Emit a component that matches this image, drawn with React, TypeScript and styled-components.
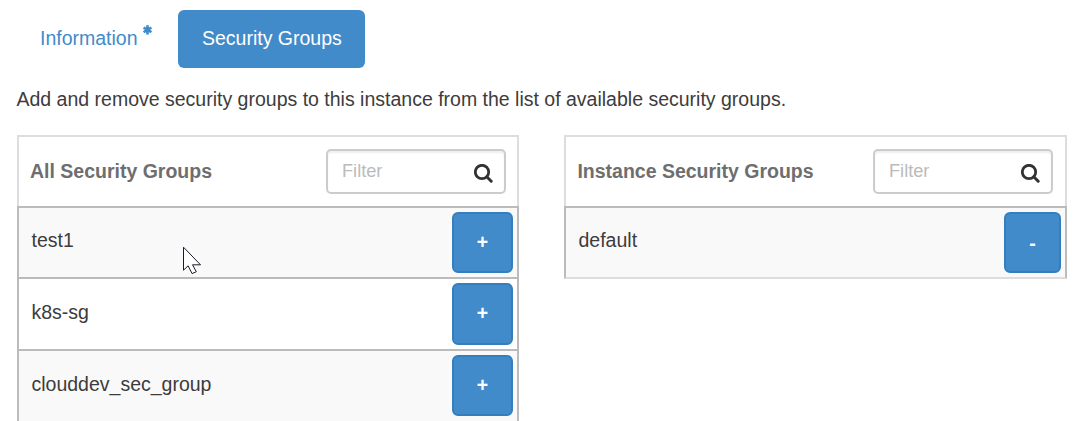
import React from "react";
import styled, { createGlobalStyle } from "styled-components";

const GlobalStyle = createGlobalStyle`
  *, *::before, *::after { box-sizing: border-box; }
  html, body { margin: 0; background: #fff; }
  body { overflow: hidden; }
`;

const Page = styled.main`
  position: relative;
  height: 421px;
  overflow: hidden;
  padding: 10px 16px 0 17px;
  font-family: "Liberation Sans", Arial, sans-serif;
  font-size: 19.5px;
  line-height: 28px;
  color: #3c3c3c;
`;

const Tabs = styled.nav`
  display: flex;
  height: 58px;
`;

const Tab = styled.button<{ $active?: boolean; $width: number }>`
  display: flex;
  width: ${(p) => p.$width}px;
  height: 58px;
  padding: 14px 0 0 ${(p) => (p.$active ? 24 : 23)}px;
  border: 0;
  border-radius: 6px;
  font: inherit;
  text-align: left;
  white-space: nowrap;
  color: ${(p) => (p.$active ? "#fff" : "#428bca")};
  background: ${(p) => (p.$active ? "#428bca" : "transparent")};
`;

const Required = styled.svg`
  width: 9px;
  height: 10px;
  margin: 1px 0 0 5px;
`;

const Intro = styled.p`
  margin: 17px 0 0 -0.5px;
  white-space: nowrap;
`;

const Tables = styled.div`
  display: grid;
  grid-template-columns: 502px 503px;
  column-gap: 45px;
  align-items: start;
  margin-top: 22px;
`;

const Panel = styled.section`
  min-width: 0;
`;

const PanelHeader = styled.header<{ $left: number; $right: number }>`
  display: flex;
  justify-content: space-between;
  height: 71px;
  padding: 12px ${(p) => p.$right}px 0 ${(p) => p.$left}px;
  border: 2px solid #ddd;
  border-bottom: 0;
`;

const Title = styled.h2`
  margin: 8px 0 0;
  font-size: 19.5px;
  line-height: 28px;
  font-weight: 700;
  color: #6e6e6e;
  white-space: nowrap;
`;

const Search = styled.label`
  display: flex;
  justify-content: space-between;
  width: 180px;
  height: 45px;
  padding: 0 11px 0 14px;
  border: 2px solid #ccc;
  border-radius: 5px;
  background: #fff;
  box-shadow: inset 0 2px 2px rgba(0, 0, 0, 0.07);
`;

const Input = styled.input`
  width: 110px;
  height: 40px;
  padding: 1px 0 0;
  border: 0;
  outline: 0;
  background: transparent;
  font: inherit;
  font-size: 18.2px;
  color: #3c3c3c;
  &::placeholder { color: #bbb; opacity: 1; }
`;

const SearchIcon = styled.svg`
  width: 19px;
  height: 19px;
  margin-top: 13px;
`;

const Row = styled.div<{ $height: number; $striped?: boolean; $last?: boolean }>`
  display: flex;
  justify-content: space-between;
  height: ${(p) => p.$height}px;
  padding: 4px 4px 0 12.5px;
  border: 2px solid #bbb;
  border-bottom: ${(p) => (p.$last ? "2px solid #ddd" : "0")};
  background: ${(p) => (p.$striped ? "#f9f9f9" : "#fff")};
`;

const Name = styled.span<{ $offset: number }>`
  margin-top: ${(p) => p.$offset}px;
`;

const Action = styled.button<{ $width: number; $height: number; $lift?: number }>`
  width: ${(p) => p.$width}px;
  height: ${(p) => p.$height}px;
  padding: 0 0 ${(p) => p.$lift ?? 2}px;
  border: 2px solid #357ebd;
  border-radius: 6px;
  background: #428bca;
  color: #fff;
  font: 700 19.5px/28px "Liberation Sans", Arial, sans-serif;
`;

const Cursor = styled.svg`
  position: absolute;
  left: 183px;
  top: 246px;
  width: 19px;
  height: 29px;
`;

function Filter() {
  return (
    <Search>
      <Input placeholder="Filter" />
      <SearchIcon viewBox="0 0 19 19" fill="none" stroke="#333">
        <circle cx="8" cy="8" r="6.7" strokeWidth="2.8" />
        <path d="M12.8 12.8 17.2 17.2" strokeWidth="3" strokeLinecap="round" />
      </SearchIcon>
    </Search>
  );
}

const available = [
  { name: "test1", height: 71, button: 61, offset: 14 },
  { name: "k8s-sg", height: 72, button: 62, offset: 15 },
  { name: "clouddev_sec_group", height: 72, button: 61, offset: 15 },
];

export default function App() {
  return (
    <Page>
      <GlobalStyle />
      <Tabs>
        <Tab $width={161}>
          Information
          <Required viewBox="0 0 9 10" stroke="#428bca" strokeWidth="2.7">
            <path d="M4.5.2v9.4M.6 2.6l7.8 4.6M8.4 2.6.6 7.2" />
          </Required>
        </Tab>
        <Tab $active $width={187}>Security Groups</Tab>
      </Tabs>
      <Intro>
        Add and remove security groups to this instance from the list of available security groups.
      </Intro>
      <Tables>
        <Panel>
          <PanelHeader $left={11} $right={11}>
            <Title>All Security Groups</Title>
            <Filter />
          </PanelHeader>
          {available.map((group, i) => (
            <Row key={group.name} $height={group.height} $striped={i % 2 === 0}>
              <Name $offset={group.offset}>{group.name}</Name>
              <Action $width={61} $height={group.button}>+</Action>
            </Row>
          ))}
        </Panel>
        <Panel>
          <PanelHeader $left={11.4} $right={12}>
            <Title>Instance Security Groups</Title>
            <Filter />
          </PanelHeader>
          <Row $height={73} $striped $last>
            <Name $offset={14}>default</Name>
            <Action $width={57} $height={61} $lift={0}>-</Action>
          </Row>
        </Panel>
      </Tables>
      <Cursor viewBox="0 0 19 29">
        <path
          d="M.5 1.2v23l4.6-4.4 4 7.8 4.2-1.9-3.8-6.9h8z"
          fill="#fff"
          stroke="#1a1a2a"
          strokeWidth="1"
        />
      </Cursor>
    </Page>
  );
}
